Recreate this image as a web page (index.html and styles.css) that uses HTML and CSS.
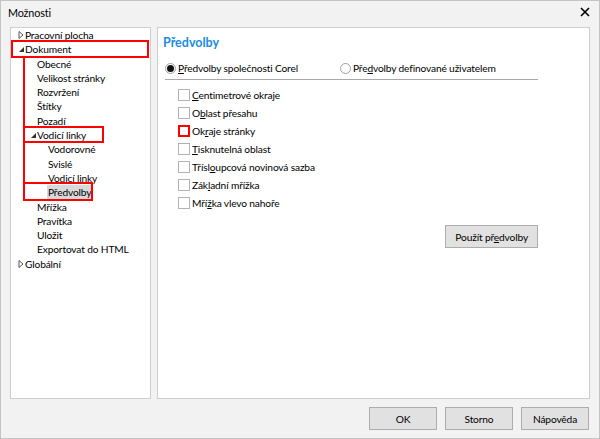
FILE: index.html
```html
<!DOCTYPE html>
<html lang="cs">
<head>
    <meta charset="UTF-8">
    <title>Možnosti</title>
    <link rel="stylesheet" href="styles.css">
</head>
<body>
<div class="window">
    <div class="titlebar">
        <span class="title">Možnosti</span>
        <svg class="close" width="10" height="10" viewBox="0 0 10 10">
            <path d="M1 1 L9 9 M9 1 L1 9" stroke="#000" stroke-width="1.6"/>
        </svg>
    </div>
    <div class="content">
        <div class="tree">
            <div class="node lvl0"><span class="tw"><svg width="6" height="8" viewBox="0 0 6 8"><path d="M1 0.5 L5 4 L1 7.5 Z" fill="none" stroke="#555" stroke-width="1"/></svg></span>Pracovní plocha</div>
            <div class="node lvl0"><span class="tw"><svg width="6" height="8" viewBox="0 0 6 8"><path d="M6 2 L6 7 L1 7 Z" fill="#333"/></svg></span>Dokument</div>
            <div class="node lvl1">Obecné</div>
            <div class="node lvl1">Velikost stránky</div>
            <div class="node lvl1">Rozvržení</div>
            <div class="node lvl1">Štítky</div>
            <div class="node lvl1">Pozadí</div>
            <div class="node lvl1 parent"><span class="tw"><svg width="6" height="8" viewBox="0 0 6 8"><path d="M6 2 L6 7 L1 7 Z" fill="#333"/></svg></span>Vodicí linky</div>
            <div class="node lvl2">Vodorovné</div>
            <div class="node lvl2">Svislé</div>
            <div class="node lvl2">Vodicí linky</div>
            <div class="node lvl2"><span class="selected">Předvolby</span></div>
            <div class="node lvl1">Mřížka</div>
            <div class="node lvl1">Pravítka</div>
            <div class="node lvl1">Uložit</div>
            <div class="node lvl1">Exportovat do HTML</div>
            <div class="node lvl0"><span class="tw"><svg width="6" height="8" viewBox="0 0 6 8"><path d="M1 0.5 L5 4 L1 7.5 Z" fill="none" stroke="#555" stroke-width="1"/></svg></span>Globální</div>

            <div class="mark mark-doc"></div>
            <div class="mark mark-line1"></div>
            <div class="mark mark-guides"></div>
            <div class="mark mark-line2"></div>
            <div class="mark mark-presets"></div>
        </div>
        <div class="page">
            <h1>Předvolby</h1>
            <div class="radios">
                <label class="radio"><span class="dot on"></span><span><u>P</u>ředvolby společnosti Corel</span></label>
                <label class="radio second"><span class="dot"></span><span>Pře<u>d</u>volby definované uživatelem</span></label>
            </div>
            <div class="checks">
                <label class="check"><span class="box"></span><span><u>C</u>entimetrové okraje</span></label>
                <label class="check"><span class="box"></span><span>O<u>b</u>last přesahu</span></label>
                <label class="check"><span class="box marked"></span><span>Ok<u>r</u>aje stránky</span></label>
                <label class="check"><span class="box"></span><span><u>T</u>isknutelná oblast</span></label>
                <label class="check"><span class="box"></span><span>Třísl<u>o</u>upcová novinová sazba</span></label>
                <label class="check"><span class="box"></span><span>Zák<u>l</u>adní mřížka</span></label>
                <label class="check"><span class="box"></span><span>Mří<u>ž</u>ka vlevo nahoře</span></label>
            </div>
            <div class="apply-row">
                <button class="btn apply">Použít př<u>e</u>dvolby</button>
            </div>
        </div>
    </div>
    <div class="footer">
        <button class="btn">OK</button>
        <button class="btn">Storno</button>
        <button class="btn">Nápověda</button>
    </div>
</div>
</body>
</html>
```

FILE: styles.css
```css
* {
    margin: 0;
    padding: 0;
    box-sizing: border-box;
}

body {
    font-family: Lato, "Noto Sans", sans-serif;
    font-size: 10.2px;
    letter-spacing: -0.15px;
    color: #000;
    background: #fff;
}

.window {
    width: 600px;
    height: 439px;
    background: #f2f2f2;
    border: 1px solid #c4c4c4;
    display: flex;
    flex-direction: column;
}

.titlebar {
    height: 26px;
    display: flex;
    align-items: center;
    justify-content: space-between;
    padding: 0 8px 4px 7px;
}

.title {
    font-size: 10.8px;
}

.close {
    margin-right: 1px;
}

.content {
    display: flex;
    gap: 6px;
    padding: 0 9px 0 9px;
    height: 372px;
}

.tree {
    position: relative;
    width: 141px;
    background: #fff;
    border: 1px solid #cfcfcf;
}

.node {
    height: 14.3px;
    line-height: 14.3px;
    white-space: nowrap;
    display: flex;
    align-items: center;
}

.lvl0 {
    padding-left: 7px;
}

.lvl1 {
    padding-left: 26px;
}

.lvl1.parent {
    padding-left: 19px;
}

.lvl2 {
    padding-left: 37px;
}

.tw {
    width: 7px;
    display: flex;
    align-items: center;
}

.selected {
    background: #d9d9d9;
    padding: 0 1px;
    margin-left: -1px;
}

.mark {
    position: absolute;
    border: 2px solid #f00;
}

.mark-doc {
    left: 0;
    top: 12px;
    width: 138px;
    height: 18px;
}

.mark-line1 {
    left: 12px;
    top: 29px;
    width: 2px;
    height: 70px;
    border-width: 0 0 0 2px;
}

.mark-guides {
    left: 12px;
    top: 98px;
    width: 81px;
    height: 17px;
}

.mark-line2 {
    left: 12px;
    top: 114px;
    width: 2px;
    height: 42px;
    border-width: 0 0 0 2px;
}

.mark-presets {
    left: 12px;
    top: 154px;
    width: 70px;
    height: 19px;
}

.page {
    flex: 1;
    background: #fff;
    border: 1px solid #cfcfcf;
    padding: 6px 0 0 5px;
}

h1 {
    font-size: 12.5px;
    letter-spacing: 0;
    font-weight: bold;
    color: #1a8ce6;
    height: 18px;
    line-height: 18px;
}

.radios {
    display: flex;
    margin: 8px 51px 0 2px;
    padding-bottom: 3px;
    border-bottom: 1px solid #a8a8a8;
    height: 20px;
    align-items: center;
}

.radio {
    display: flex;
    align-items: center;
    gap: 2px;
}

.radio.second {
    margin-left: 42px;
}

.dot {
    width: 11px;
    height: 11px;
    border: 1px solid #a0a0a0;
    border-radius: 50%;
    background: #fff;
    display: flex;
    align-items: center;
    justify-content: center;
}

.dot.on::after {
    content: "";
    width: 7px;
    height: 7px;
    border-radius: 50%;
    background: #111;
}

.checks {
    margin: 6px 0 0 15px;
    display: flex;
    flex-direction: column;
}

.check {
    display: flex;
    align-items: center;
    gap: 2px;
    height: 18px;
}

.box {
    width: 12px;
    height: 12px;
    border: 1px solid #b3b3b3;
    background: #fff;
}

.box.marked {
    border: 2px solid #f00;
}

u {
    text-decoration-thickness: 1px;
    text-underline-offset: 1px;
}

.apply-row {
    display: flex;
    justify-content: flex-end;
    margin: 13px 51px 0 0;
}

.btn {
    font-family: inherit;
    font-size: 10.2px;
    letter-spacing: -0.15px;
    background: #e1e1e1;
    border: 1px solid #adadad;
    height: 23px;
    min-width: 68px;
    padding: 0 9px;
    color: #000;
}

.footer {
    flex: 1;
    display: flex;
    justify-content: flex-end;
    align-items: center;
    gap: 8px;
    padding: 0 10px 0 0;
}
```
